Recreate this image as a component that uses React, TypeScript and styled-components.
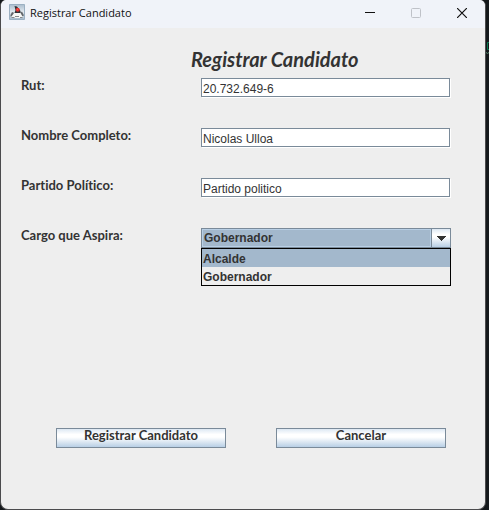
import React, { useState } from "react";
import styled, { createGlobalStyle } from "styled-components";

const GlobalStyle = createGlobalStyle`
  *, *::before, *::after { box-sizing: border-box; }
  body { margin: 0; background: #14181b; }
`;

const Desktop = styled.div`
  position: relative;
  display: flex;
  min-height: 100vh;
  padding-right: 3px;
  background: #14181b;
`;

const EditorMark = styled.svg`
  position: absolute;
  top: 41px;
  right: 0;
`;

const Window = styled.main`
  display: flex;
  flex-direction: column;
  flex: 1;
  min-width: 0;
  border: 1px solid #4b4b4d;
  border-top: 0;
  border-radius: 6px 6px 8px 8px;
  background: #eeeeee;
  color: #333333;
  overflow: hidden;
`;

const TitleBar = styled.header`
  display: flex;
  align-items: flex-start;
  height: 28px;
  padding-left: 8px;
  background: #f0f3f9;
`;

const AppIcon = styled.svg`
  margin-top: 4px;
  flex: none;
`;

const WindowTitle = styled.span`
  flex: 1;
  margin-left: 5px;
  color: #111111;
  font: 400 11px/26px "Open Sans", sans-serif;
  white-space: nowrap;
`;

const WindowButton = styled.button`
  display: grid;
  place-items: center;
  width: 46px;
  height: 25px;
  padding: 0;
  border: 0;
  background: transparent;
  color: #111111;

  &:disabled { color: #bfc2c8; }
`;

const Form = styled.form`
  display: flex;
  flex: 1;
  flex-direction: column;
  padding: 20px 34px 61px 20px;
`;

const Heading = styled.h1`
  margin: 0 0 8px;
  padding-left: 170px;
  font: italic 700 20px/22px Lato, sans-serif;
  font-variant-ligatures: none;
  white-space: nowrap;
`;

const Fields = styled.div`
  display: grid;
  gap: 30px;
`;

const Row = styled.div`
  display: grid;
  grid-template-columns: 180px 1fr;
  height: 20px;
`;

const Label = styled.label`
  font: 700 13px/14px Lato, sans-serif;
  font-variant-ligatures: none;
`;

const TextField = styled.input`
  width: calc(100% - 1px);
  min-width: 0;
  height: 19px;
  padding: 2px 1px 0;
  border: 1px solid #7a8a99;
  border-radius: 0;
  outline: 0;
  background: #ffffff;
  box-shadow: 1px 1px 0 #ffffff;
  color: #333333;
  font: 400 12px/16px "Liberation Sans", Arial, sans-serif;
`;

const Combo = styled.div`
  position: relative;
  display: grid;
  grid-template-columns: 1fr 19px;
  border: 1px solid #7a8a99;
  background: #a3b8cc;
`;

const Select = styled.select`
  min-width: 0;
  height: 18px;
  padding: 0 1px;
  border: 1px solid #b8cfe5;
  border-radius: 0;
  outline: 0;
  appearance: none;
  background: #a3b8cc;
  color: #333333;
  font: 700 12px/16px "Liberation Sans", Arial, sans-serif;
`;

const metal = "linear-gradient(#dde8f3, #ffffff 30%, #ffffff 45%, #b8cfe5)";

const ComboArrow = styled.button`
  display: grid;
  place-items: center;
  height: 18px;
  padding: 0;
  border: 0;
  border-left: 1px solid #7a8a99;
  background: ${metal};
`;

const Popup = styled.ul`
  position: absolute;
  z-index: 1;
  top: 100%;
  left: -1px;
  right: -1px;
  margin: 1px 0 0;
  padding: 0;
  border: 1px solid #000000;
  background: #eeeeee;
  list-style: none;
`;

const Option = styled.li<{ $active: boolean }>`
  height: 18px;
  padding: 1px;
  background: ${({ $active }) => ($active ? "#a3b8cc" : "#eeeeee")};
  font: 700 12px/18px "Liberation Sans", Arial, sans-serif;
`;

const Actions = styled.div`
  display: grid;
  grid-template-columns: 1fr 1fr;
  gap: 50px;
  margin: auto 5px 0 35px;
`;

const ActionButton = styled.button`
  height: 20px;
  padding: 0 0 6px;
  border: 1px solid #7a8a99;
  border-radius: 0;
  background: ${metal};
  color: #333333;
  font: 700 13px/12px Lato, sans-serif;
  font-variant-ligatures: none;
  white-space: nowrap;
`;

const cargos = ["Alcalde", "Gobernador"];

const textFields = [
  { id: "rut", label: "Rut:", value: "20.732.649-6" },
  { id: "nombre", label: "Nombre Completo:", value: "Nicolas Ulloa" },
  { id: "partido", label: "Partido Político:", value: "Partido politico" },
];

function DukeIcon() {
  return (
    <AppIcon width="16" height="16" viewBox="0 0 16 16" aria-hidden="true">
      <defs>
        <linearGradient id="tile" x2="0" y2="1">
          <stop stopColor="#a9bccd" />
          <stop offset=".5" stopColor="#e3eaf0" />
          <stop offset="1" stopColor="#a5b9cb" />
        </linearGradient>
      </defs>
      <path d="M.5.5h15v15H.5z" fill="url(#tile)" stroke="#9bb0c2" />
      <path d="M1.500 11 3 8l2.500 1v3l-4 .5zM11 9l2-1.500 2 4-2.500 1z" fill="#62666a" />
      <path d="M5 9h6.500l2 3.500-.5 1.500H3l-.5-1.500z" fill="#f7f7f5" />
      <path d="M2.500 13.500h3M11 13.500h2.500M6 12.500h4" stroke="#85898c" fill="none" />
      <path d="M5.500 2 8 2.500 11.500 7v2H5.500L6.500 6z" fill="#303236" />
      <circle cx="8.700" cy="5.800" r="2" fill="#e5302d" />
      <path d="M8 5.300h1" stroke="#f36b60" />
    </AppIcon>
  );
}

export default function App() {
  const [open, setOpen] = useState(true);
  const [cargo, setCargo] = useState("Gobernador");
  const [active, setActive] = useState("Alcalde");

  return (
    <>
      <GlobalStyle />
      <Desktop>
        <Window>
          <TitleBar>
            <DukeIcon />
            <WindowTitle>Registrar Candidato</WindowTitle>
            <WindowButton type="button" aria-label="Minimizar">
              <svg width="10" height="10" aria-hidden="true">
                <path d="M0 4.500h10" stroke="currentColor" />
              </svg>
            </WindowButton>
            <WindowButton type="button" aria-label="Maximizar" disabled>
              <svg width="10" height="10" aria-hidden="true">
                <rect x=".5" y=".5" width="9" height="9" rx="1" fill="none" stroke="currentColor" />
              </svg>
            </WindowButton>
            <WindowButton type="button" aria-label="Cerrar">
              <svg width="10" height="10" aria-hidden="true">
                <path d="m0 0 10 10M10 0 0 10" stroke="currentColor" strokeWidth="1.2" />
              </svg>
            </WindowButton>
          </TitleBar>
          <Form onSubmit={(e) => e.preventDefault()}>
            <Heading>Registrar Candidato</Heading>
            <Fields>
              {textFields.map((f) => (
                <Row key={f.id}>
                  <Label htmlFor={f.id}>{f.label}</Label>
                  <TextField id={f.id} type="text" defaultValue={f.value} />
                </Row>
              ))}
              <Row>
                <Label htmlFor="cargo">Cargo que Aspira:</Label>
                <Combo>
                  <Select id="cargo" value={cargo} onChange={(e) => setCargo(e.target.value)}>
                    {cargos.map((c) => (
                      <option key={c}>{c}</option>
                    ))}
                  </Select>
                  <ComboArrow
                    type="button"
                    aria-label="Mostrar cargos"
                    aria-expanded={open}
                    onClick={() => setOpen(!open)}
                  >
                    <svg width="10" height="5" shapeRendering="crispEdges" aria-hidden="true">
                      <path d="M0 0h10L5 5z" fill="#333333" />
                    </svg>
                  </ComboArrow>
                  {open && (
                    <Popup role="listbox" aria-label="Cargos">
                      {cargos.map((c) => (
                        <Option
                          key={c}
                          role="option"
                          aria-selected={c === active}
                          $active={c === active}
                          onMouseEnter={() => setActive(c)}
                          onClick={() => {
                            setCargo(c);
                            setOpen(false);
                          }}
                        >
                          {c}
                        </Option>
                      ))}
                    </Popup>
                  )}
                </Combo>
              </Row>
            </Fields>
            <Actions>
              <ActionButton type="submit">Registrar Candidato</ActionButton>
              <ActionButton type="button">Cancelar</ActionButton>
            </Actions>
          </Form>
        </Window>
        <EditorMark width="3" height="14" aria-hidden="true">
          <path d="M3 1.500H1.500v7H3" fill="none" stroke="#087a50" />
          <path d="m0 11 1.500 2L3 11" fill="none" stroke="#4c7560" />
        </EditorMark>
      </Desktop>
    </>
  );
}
